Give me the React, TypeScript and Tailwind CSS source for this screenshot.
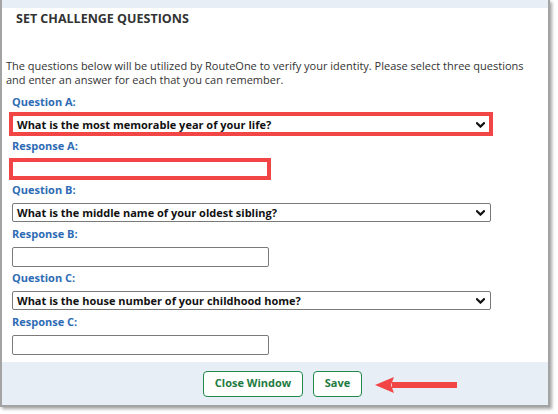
import React from "react";

type Field = {
    letter: string;
    question: string;
    highlight?: boolean;
};

const fields: Field[] = [
    { letter: "A", question: "What is the most memorable year of your life?", highlight: true },
    { letter: "B", question: "What is the middle name of your oldest sibling?" },
    { letter: "C", question: "What is the house number of your childhood home?" },
];

function Chevron() {
    return (
        <svg width="9" height="6" viewBox="0 0 9 6" className="shrink-0">
            <path d="M1 1.2 L4.5 4.6 L8 1.2" fill="none" stroke="#111" strokeWidth="2.2" strokeLinecap="square" />
        </svg>
    );
}

function FieldGroup({ field }: { field: Field }) {
    return (
        <div className="flex flex-col">
            <div className="h-[14px] leading-[14px] text-[11px] font-bold text-[#2d6bb5]">Question {field.letter}:</div>
            <div className="relative mt-[6px] w-[479px] h-[19px]">
                <div className="h-full flex items-center justify-between pl-[4px] pr-[5px] border border-[#7a7a7a] rounded-[2px] bg-white">
                    <span className="text-[11px] font-bold text-[#111] leading-[14px]">{field.question}</span>
                    <Chevron />
                </div>
                {field.highlight && (
                    <div className="absolute -left-[3px] -right-[2px] -top-[3px] -bottom-[2px] border-4 border-[#f24545]" />
                )}
            </div>
            <div className="mt-[5px] h-[14px] leading-[14px] text-[11px] font-bold text-[#2d6bb5]">Response {field.letter}:</div>
            <div className="relative mt-[6px] w-[257px] h-[20px]">
                <div className="h-full border border-[#7a7a7a] rounded-[2px] bg-white" />
                {field.highlight && (
                    <div className="absolute -left-[3px] -right-[2px] -top-[1px] -bottom-[1px] border-4 border-[#f24545]" />
                )}
            </div>
        </div>
    );
}

export default function App() {
    return (
        <div className="w-[558px] h-[414px] bg-white font-['Open_Sans',sans-serif]">
            <div className="w-[550px] h-[407px] flex flex-col border-l-2 border-r-2 border-b-2 border-[#a3a3a3] shadow-[2px_2px_3px_rgba(0,0,0,0.35)] bg-white">
                <div className="h-[8px] bg-[#e8eef6]" />
                <div className="pl-[14px] pt-[3px] h-[19px] leading-[16px] text-[12.5px] font-bold text-[#333]">
                    SET CHALLENGE QUESTIONS
                </div>
                <p className="mt-[32px] pl-[4px] text-[11px] leading-[14px] text-[#333]">
                    The questions below will be utilized by RouteOne to verify your identity. Please select three questions
                    <br />
                    and enter an answer for each that you can remember.
                </p>
                <div className="mt-[8px] pl-[10px] flex flex-col gap-[4px]">
                    {fields.map((f) => (
                        <FieldGroup key={f.letter} field={f} />
                    ))}
                </div>
                <div className="mt-auto h-[43px] bg-[#e8eef6] relative flex items-center pl-[201px] gap-[10px]">
                    <button className="h-[26px] w-[100px] rounded-[4px] border border-[#1f8a4c] bg-white text-[11px] font-bold text-[#1d7a40]">
                        Close Window
                    </button>
                    <button className="h-[26px] w-[49px] rounded-[4px] border border-[#1f8a4c] bg-white text-[11px] font-bold text-[#1d7a40]">
                        Save
                    </button>
                    <svg className="absolute left-[372px] top-[14px]" width="84" height="18" viewBox="0 0 84 18">
                        <polygon points="1,9 20,1 17,9 20,17" fill="#f24545" />
                        <rect x="18" y="6" width="65" height="6" fill="#f24545" />
                    </svg>
                </div>
            </div>
        </div>
    );
}
